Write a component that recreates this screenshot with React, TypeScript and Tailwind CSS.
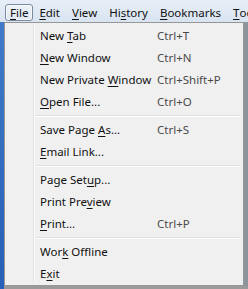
import React from "react"

type Item = { label: React.ReactNode; key?: string }

const u = (s: string) => <span className="underline underline-offset-[2px]">{s}</span>

const groups: Item[][] = [
    [
        { label: <>New {u("T")}ab</>, key: "Ctrl+T" },
        { label: <>{u("N")}ew Window</>, key: "Ctrl+N" },
        { label: <>New Private {u("W")}indow</>, key: "Ctrl+Shift+P" },
        { label: <>{u("O")}pen File...</>, key: "Ctrl+O" },
    ],
    [
        { label: <>Save Page {u("A")}s...</>, key: "Ctrl+S" },
        { label: <>{u("E")}mail Link...</> },
    ],
    [
        { label: <>Page Set{u("u")}p...</> },
        { label: <>Print Pre{u("v")}iew</> },
        { label: <>{u("P")}rint...</>, key: "Ctrl+P" },
    ],
    [
        { label: <>Wor{u("k")} Offline</> },
        { label: <>E{u("x")}it</> },
    ],
]

function MenuBar() {
    const items = [
        <>{u("F")}ile</>,
        <>{u("E")}dit</>,
        <>{u("V")}iew</>,
        <>Hi{u("s")}tory</>,
        <>{u("B")}ookmarks</>,
        <>{u("T")}ools</>,
    ]
    return (
        <div className="h-[22px] flex items-stretch bg-gradient-to-b from-[#e8eef7] to-[#d9e4f1] pl-[5px] pt-[4px] pb-px whitespace-nowrap overflow-hidden">
            {items.map((it, i) => (
                <div
                    key={i}
                    className={
                        i === 0
                            ? "flex items-center px-[4px] border border-[#7a8ba1] rounded-[3px] bg-gradient-to-b from-[#eef3f9] to-[#dfe7f1] shadow-[inset_0_0_0_1px_#f7fafd]"
                            : "flex items-center px-[5px] border border-transparent"
                    }
                >
                    {it}
                </div>
            ))}
        </div>
    )
}

function Row({ item }: { item: Item }) {
    return (
        <div className="h-[22px] flex items-center">
            <div className="w-[33px]" />
            <div className="w-[119px] pl-[2px]">{item.label}</div>
            {item.key && <div className="text-[#4a4a4a]">{item.key}</div>}
        </div>
    )
}

export default function App() {
    return (
        <div
            className="w-[248px] h-[289px] overflow-hidden bg-[#7d8793] text-[11.5px] text-[#111] leading-none"
            style={{ fontFamily: '"Noto Sans", "Open Sans", sans-serif' }}
        >
            <MenuBar />
            <div className="flex h-[264px]">
                <div className="w-[4px] bg-gradient-to-b from-[#3f7bc9] to-[#2660b8]" />
                <div className="relative w-[240px] border border-[#979797] bg-[#f0f0f0] pt-[2px] pr-[2px] flex flex-col">
                    <div className="absolute left-[28px] top-[2px] bottom-[2px] w-[2px] border-l border-[#e2e3e3] bg-white/70" />
                    {groups.map((g, gi) => (
                        <div key={gi}>
                            {gi > 0 && (
                                <div className="h-[6px] flex items-center pl-[30px]">
                                    <div className="w-full h-[2px] border-t border-[#e0e0e0] bg-white" />
                                </div>
                            )}
                            {g.map((it, ii) => (
                                <Row key={ii} item={it} />
                            ))}
                        </div>
                    ))}
                </div>
                <div className="flex-1 bg-[#8c949c]" />
            </div>
            <div className="h-[3px] flex">
                <div className="w-[4px] bg-[#2660b8]" />
                <div className="flex-1 bg-[#9a9a9a]" />
            </div>
        </div>
    )
}
